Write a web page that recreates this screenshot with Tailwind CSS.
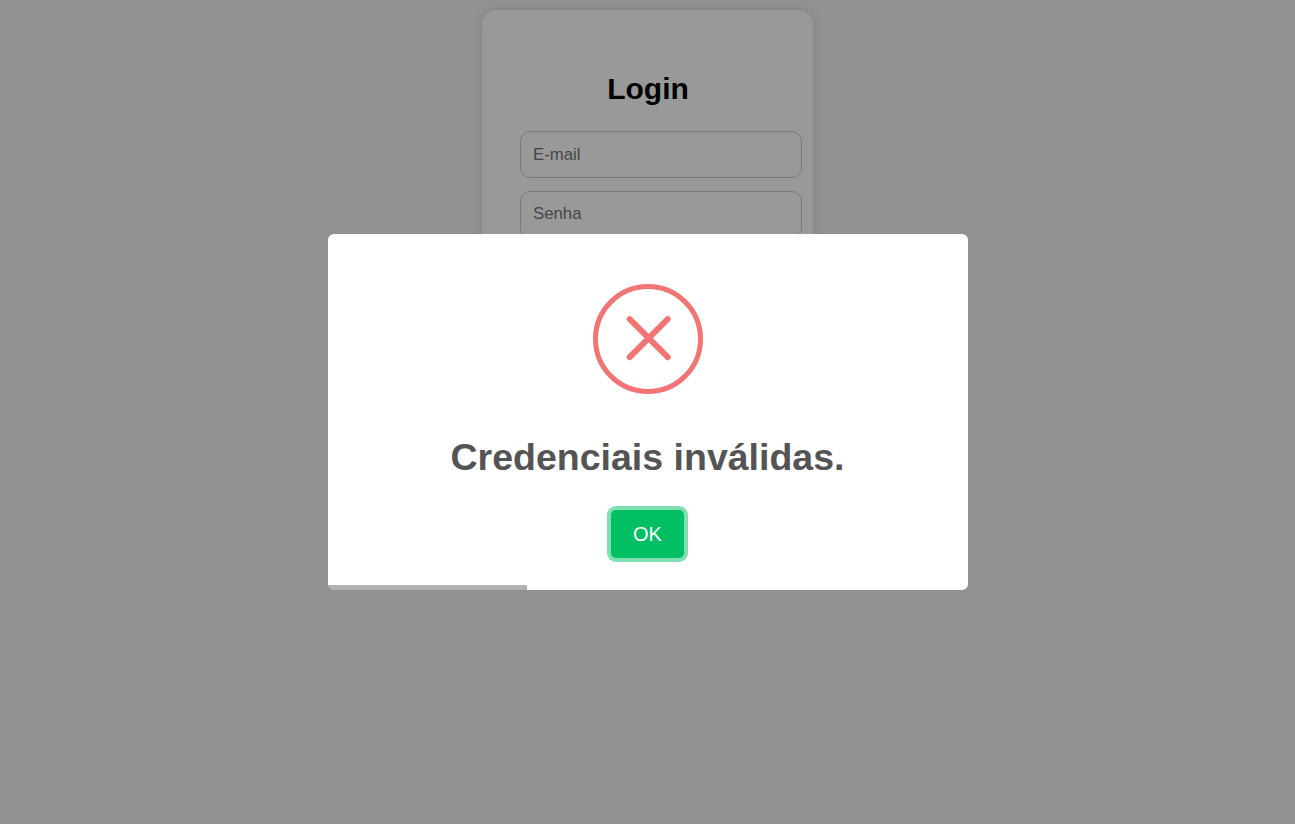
<!DOCTYPE html>
<html lang="pt-BR">
<head>
<meta charset="utf-8">
<title>Login</title>
<script src="https://cdn.jsdelivr.net/npm/@tailwindcss/browser@4"></script>
</head>
<body class="h-screen overflow-hidden bg-[#f2f2f5] font-['Liberation_Sans',Arial,sans-serif]">
<main class="flex justify-center pt-[10px]">
  <form class="h-[460px] w-[331px] rounded-[15px] bg-white pt-[61px] pl-[38px] shadow-[0_0_12px_rgba(0,20,30,0.1)]">
    <h1 class="mb-[25px] w-[256px] text-center text-[30px] leading-[35px] font-bold text-black">Login</h1>
    <input type="email" placeholder="E-mail" class="mb-[13px] block h-[47px] w-[282px] rounded-[10px] border border-[#ccc] px-[12px] text-[16.8px] placeholder:text-[#757575]">
    <input type="password" placeholder="Senha" class="block h-[47px] w-[282px] rounded-[10px] border border-[#ccc] px-[12px] pb-[2px] text-[16.8px] placeholder:text-[#757575]">
  </form>
</main>
<div class="fixed inset-0 flex items-center justify-center bg-black/40">
  <div role="dialog" class="relative flex h-[356px] w-[640px] flex-col items-center overflow-hidden rounded-[6px] bg-white pt-[50px]">
    <svg class="h-[110px] w-[110px] shrink-0" viewBox="0 0 110 110" fill="none" stroke="#f27474">
      <circle cx="55" cy="55" r="52.5" stroke-width="5"/>
      <path d="M36.7 35.2 74.7 73.2M74.7 35.2 36.7 73.2" stroke-width="6" stroke-linecap="round"/>
    </svg>
    <h2 class="mt-[42px] text-[37.5px] leading-[43px] font-bold text-[#545454]">Credenciais inválidas.</h2>
    <button class="mt-[31px] h-[48px] w-[73px] rounded-[5px] bg-[#00bf63] text-[20px] text-white shadow-[0_0_0_4px_rgba(0,191,99,0.5)]">OK</button>
    <div class="absolute bottom-0 left-0 h-[5px] w-[199px] bg-black/30"></div>
  </div>
</div>
</body>
</html>
